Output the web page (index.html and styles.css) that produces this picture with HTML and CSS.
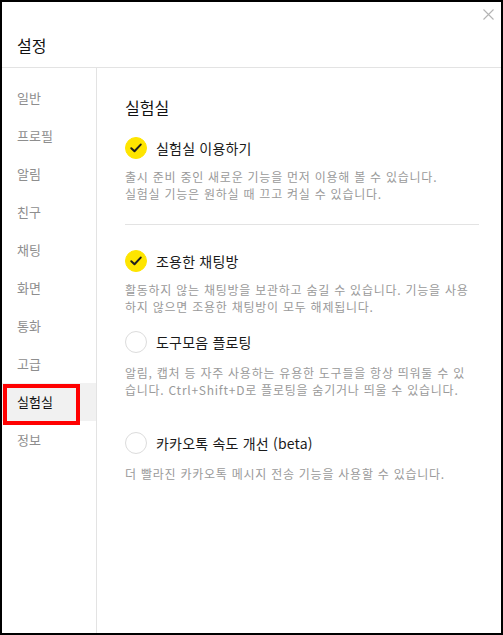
FILE: index.html
```html
<!DOCTYPE html>
<html lang="ko">
<head>
<meta charset="UTF-8" />
<meta name="viewport" content="width=device-width, initial-scale=1" />
<title>설정</title>
<link rel="stylesheet" href="styles.css">
</head>
<body>
  <div class="settings-window">
    <div class="settings-header">
      <div class="settings-title">설정</div>
      <button class="close-btn" aria-label="닫기">
        <svg width="11" height="11" viewBox="0 0 11 11"><path d="M0.5 0.5 L10.5 10.5 M10.5 0.5 L0.5 10.5" stroke="#b4b4b4" stroke-width="1.1" fill="none"/></svg>
      </button>
    </div>
    <div class="settings-body">
      <ul class="side-menu">
        <li class="menu-item">일반</li>
        <li class="menu-item">프로필</li>
        <li class="menu-item">알림</li>
        <li class="menu-item">친구</li>
        <li class="menu-item">채팅</li>
        <li class="menu-item">화면</li>
        <li class="menu-item">통화</li>
        <li class="menu-item">고급</li>
        <li class="menu-item active">실험실</li>
        <li class="menu-item">정보</li>
      </ul>
      <div class="content">
        <div class="content-title">실험실</div>

        <div class="option">
          <div class="option-row">
            <span class="check on">
              <svg width="12" height="10" viewBox="0 0 12 10"><path d="M1.3 5.2 L4.5 8.2 L10.7 1.6" stroke="#1e1e1e" stroke-width="2" fill="none" stroke-linecap="round" stroke-linejoin="round"/></svg>
            </span>
            <span class="option-label">실험실 이용하기</span>
          </div>
          <p class="option-desc">출시 준비 중인 새로운 기능을 먼저 이용해 볼 수 있습니다.<br>실험실 기능은 원하실 때 끄고 켜실 수 있습니다.</p>
        </div>

        <div class="divider"></div>

        <div class="option">
          <div class="option-row">
            <span class="check on">
              <svg width="12" height="10" viewBox="0 0 12 10"><path d="M1.3 5.2 L4.5 8.2 L10.7 1.6" stroke="#1e1e1e" stroke-width="2" fill="none" stroke-linecap="round" stroke-linejoin="round"/></svg>
            </span>
            <span class="option-label">조용한 채팅방</span>
          </div>
          <p class="option-desc">활동하지 않는 채팅방을 보관하고 숨길 수 있습니다. 기능을 사용<br>하지 않으면 조용한 채팅방이 모두 해제됩니다.</p>
        </div>

        <div class="option option-wide">
          <div class="option-row">
            <span class="check"></span>
            <span class="option-label">도구모음 플로팅</span>
          </div>
          <p class="option-desc">알림, 캡처 등 자주 사용하는 유용한 도구들을 항상 띄워둘 수 있<br>습니다. Ctrl+Shift+D로 플로팅을 숨기거나 띄울 수 있습니다.</p>
        </div>

        <div class="option option-wide">
          <div class="option-row">
            <span class="check"></span>
            <span class="option-label">카카오톡 속도 개선 (beta)</span>
          </div>
          <p class="option-desc">더 빨라진 카카오톡 메시지 전송 기능을 사용할 수 있습니다.</p>
        </div>
      </div>
    </div>
    <div class="highlight-box"></div>
  </div>
</body>
</html>
```

FILE: styles.css
```css
body {
  margin: 0;
  font-family: "Noto Sans CJK KR", "Noto Sans", sans-serif;
  background-color: #fff;
}
.settings-window {
  width: 503px;
  height: 635px;
  box-sizing: border-box;
  border: 2px solid #000;
  position: relative;
  display: flex;
  flex-direction: column;
  background-color: #fff;
}
.settings-header {
  height: 65px;
  border-bottom: 1px solid #e3e3e3;
  padding-left: 15px;
  display: flex;
  align-items: center;
  position: relative;
}
.settings-title {
  font-size: 16px;
  line-height: 20px;
  color: #111;
  margin-top: 20px;
}
.close-btn {
  position: absolute;
  top: 7px;
  right: 7px;
  border: none;
  background: none;
  padding: 0;
  width: 11px;
  height: 11px;
  cursor: pointer;
}
.close-btn svg {
  display: block;
}
.settings-body {
  flex: 1;
  display: flex;
}
.side-menu {
  list-style: none;
  margin: 0;
  padding: 11px 0 0;
  width: 94px;
  border-right: 1px solid #e3e3e3;
}
.menu-item {
  height: 38px;
  line-height: 38px;
  padding-left: 15px;
  font-size: 13px;
  color: #8e8e8e;
}
.menu-item.active {
  background-color: #f1f1f1;
  color: #111;
}
.content {
  flex: 1;
  padding: 29px 22px 0 28px;
}
.content-title {
  font-size: 16px;
  line-height: 20px;
  color: #111;
  margin-bottom: 20px;
}
.option-row {
  display: flex;
  align-items: center;
  height: 22px;
}
.check {
  width: 22px;
  height: 22px;
  box-sizing: border-box;
  border-radius: 50%;
  border: 1px solid #dcdcdc;
  background-color: #fff;
  display: flex;
  align-items: center;
  justify-content: center;
  margin-right: 9px;
}
.check.on {
  background-color: #fee500;
  border-color: #fee500;
}
.option-label {
  font-size: 14px;
  color: #1a1a1a;
  letter-spacing: 0.2px;
}
.option-desc {
  margin: 9px 0 0;
  font-size: 12px;
  line-height: 17px;
  color: #9a9a9a;
  letter-spacing: 0.75px;
  white-space: nowrap;
}
.divider {
  height: 1px;
  background-color: #e3e3e3;
  margin: 22px 0 25px;
  width: 354px;
}
.option + .option {
  margin-top: 16px;
}
.option-wide .option-desc {
  margin-top: 11px;
}
.option-wide + .option-wide {
  margin-top: 34px;
}
.highlight-box {
  position: absolute;
  left: 1px;
  top: 382px;
  width: 69px;
  height: 33px;
  border: 4px solid #ff0000;
}
```
